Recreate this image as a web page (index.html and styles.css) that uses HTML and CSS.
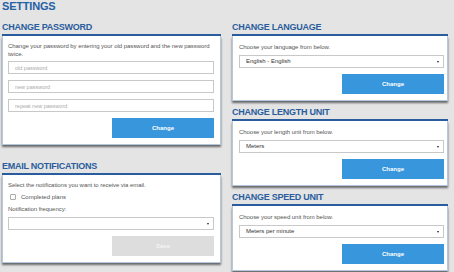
FILE: index.html
```html
<!DOCTYPE html>
<html lang="en">
<head>
    <meta charset="UTF-8">
    <meta name="viewport" content="width=device-width, initial-scale=1.0">
    <title>Settings</title>
    <link rel="stylesheet" href="styles.css">
</head>
<body>
  <h1 class="page-title">SETTINGS</h1>
  <div class="settings-grid">
    <div class="column">
      <div class="section">
        <h2>CHANGE PASSWORD</h2>
        <div class="card">
          <p>Change your password by entering your old password and the new password twice.</p>
          <input class="field first" type="password" placeholder="old password">
          <input class="field" type="password" placeholder="new password">
          <input class="field" type="password" placeholder="repeat new password">
          <div class="actions"><button class="btn">Change</button></div>
        </div>
      </div>
      <div class="section email">
        <h2>EMAIL NOTIFICATIONS</h2>
        <div class="card">
          <p>Select the notifications you want to receive via email.</p>
          <label class="check"><span class="box"></span>Completed plans</label>
          <p>Notification frequency:</p>
          <div class="select"></div>
          <div class="actions"><button class="btn disabled">Save</button></div>
        </div>
      </div>
    </div>
    <div class="column">
      <div class="section">
        <h2>CHANGE LANGUAGE</h2>
        <div class="card narrow">
          <p>Choose your language from below.</p>
          <div class="select">English - English</div>
          <div class="actions"><button class="btn">Change</button></div>
        </div>
      </div>
      <div class="section">
        <h2>CHANGE LENGTH UNIT</h2>
        <div class="card narrow">
          <p>Choose your length unit from below.</p>
          <div class="select">Meters</div>
          <div class="actions"><button class="btn">Change</button></div>
        </div>
      </div>
      <div class="section">
        <h2>CHANGE SPEED UNIT</h2>
        <div class="card narrow">
          <p>Choose your speed unit from below.</p>
          <div class="select">Meters per minute</div>
          <div class="actions"><button class="btn">Change</button></div>
        </div>
      </div>
    </div>
  </div>
</body>
</html>
```

FILE: styles.css
```css
body {
    font-family: "Liberation Sans", Arial, sans-serif;
    background-color: #e4e4e4;
    margin: 0;
    padding: 0 6px 0 2px;
    color: #444;
    overflow: hidden;
}
.page-title {
    font-size: 11px;
    line-height: 13px;
    color: #2461a6;
    margin: 0;
    padding-top: 0;
    letter-spacing: -0.2px;
}
.settings-grid {
    display: grid;
    grid-template-columns: 219px 216px;
    column-gap: 11px;
}
.section {
    margin-top: 9px;
}
.column .section + .section {
    margin-top: 6px;
}
.column .section.email {
    margin-top: 16px;
}
h2 {
    font-size: 9px;
    line-height: 11px;
    letter-spacing: -0.25px;
    color: #2a5d9d;
    margin: 0;
    padding-bottom: 1px;
    border-bottom: 2px solid #2a5d9d;
}
.card {
    background-color: #fff;
    border: 1px solid #b3c8de;
    border-top: none;
    padding: 6px 6px 6px 5px;
    box-shadow: 0 2px 2px rgba(0,0,0,0.55);
    margin-bottom: 3px;
}
.card.narrow {
    padding: 7px 3px 6px 6px;
}
p {
    font-size: 6px;
    line-height: 8px;
    letter-spacing: -0.05px;
    margin: 0;
    color: #555;
}
.field {
    display: block;
    box-sizing: border-box;
    width: 100%;
    height: 13px;
    margin: 6px 0 0;
    padding: 0 6px;
    border: 1px solid #c8c8c8;
    font-family: inherit;
    font-size: 5.5px;
    color: #555;
    outline: none;
}
.field.first {
    margin-top: 3px;
}
.field::placeholder {
    color: #aaa;
}
.select {
    position: relative;
    box-sizing: border-box;
    height: 13px;
    margin-top: 4px;
    padding: 0 6px;
    border: 1px solid #c8c8c8;
    font-size: 6px;
    line-height: 11px;
    color: #333;
}
.select::after {
    content: "";
    position: absolute;
    right: 4px;
    top: 5px;
    border-left: 1.5px solid transparent;
    border-right: 1.5px solid transparent;
    border-top: 2px solid #222;
}
.actions {
    display: flex;
    justify-content: flex-end;
    margin-top: 6px;
}
.btn {
    width: 102px;
    height: 20px;
    border: none;
    background-color: #3897dc;
    color: #fff;
    font-family: inherit;
    font-size: 6px;
    font-weight: bold;
}
.btn.disabled {
    background-color: #dddddd;
    color: #f4f4f4;
}
.check {
    display: flex;
    align-items: center;
    font-size: 6px;
    line-height: 8px;
    margin: 4px 0 4px;
    color: #555;
}
.check .box {
    width: 4px;
    height: 4px;
    border: 1px solid #aaa;
    border-radius: 1px;
    margin: 0 5px 0 2px;
}
```
